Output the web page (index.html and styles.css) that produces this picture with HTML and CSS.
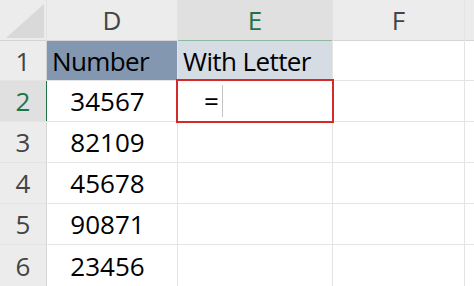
FILE: index.html
```html
<!DOCTYPE html>
<html lang="en">
<head>
    <meta charset="UTF-8">
    <title>Sheet</title>
    <link rel="stylesheet" href="styles.css">
</head>
<body>
    <div class="sheet">
        <!-- column headers -->
        <div class="corner"><span class="corner-tri"></span></div>
        <div class="col-head">D</div>
        <div class="col-head selected">E</div>
        <div class="col-head">F</div>
        <div class="col-head"></div>

        <!-- row 1 -->
        <div class="row-head">1</div>
        <div class="cell title-dark">Number</div>
        <div class="cell title-light">With Letter</div>
        <div class="cell"></div>
        <div class="cell"></div>

        <!-- row 2 -->
        <div class="row-head selected">2</div>
        <div class="cell num">34567</div>
        <div class="cell active"><span class="eq">=</span><span class="caret"></span></div>
        <div class="cell"></div>
        <div class="cell"></div>

        <div class="row-head">3</div>
        <div class="cell num">82109</div>
        <div class="cell"></div>
        <div class="cell"></div>
        <div class="cell"></div>

        <div class="row-head">4</div>
        <div class="cell num">45678</div>
        <div class="cell"></div>
        <div class="cell"></div>
        <div class="cell"></div>

        <div class="row-head">5</div>
        <div class="cell num">90871</div>
        <div class="cell"></div>
        <div class="cell"></div>
        <div class="cell"></div>

        <div class="row-head">6</div>
        <div class="cell num">23456</div>
        <div class="cell"></div>
        <div class="cell"></div>
        <div class="cell"></div>
    </div>
</body>
</html>
```

FILE: styles.css
```css
body {
    margin: 0;
    font-family: "Open Sans", "Noto Sans", sans-serif;
    background: #ffffff;
    overflow: hidden;
}

.sheet {
    display: grid;
    grid-template-columns: 46px 130px 154px 131px 1fr;
    grid-template-rows: 40px 39px 40px 40px 40px 40px 42px;
    gap: 1px;
    background-color: #e4e4e4;
    width: 474px;
    height: 286px;
}

.corner {
    position: relative;
    background-color: #ececec;
    box-shadow: 0 1px 0 #d4d4d4;
}

.corner-tri {
    position: absolute;
    right: 2px;
    bottom: 2px;
    width: 0;
    height: 0;
    border-left: 38px solid transparent;
    border-bottom: 34px solid #d9d9d9;
}

.col-head {
    display: flex;
    align-items: center;
    justify-content: center;
    background-color: #ececec;
    color: #444444;
    font-size: 26px;
    box-shadow: 0 1px 0 #d4d4d4;
}

.col-head.selected {
    background-color: #e0e0e0;
    color: #217346;
    box-shadow: 0 1px 0 #8fb8a0;
}

.row-head {
    display: flex;
    align-items: center;
    justify-content: center;
    background-color: #ececec;
    color: #444444;
    font-size: 26px;
    box-shadow: 1px 0 0 #d4d4d4;
}

.row-head.selected {
    background-color: #e0e0e0;
    color: #217346;
    box-shadow: 1px 0 0 #217346;
}

.cell {
    display: flex;
    align-items: center;
    background-color: #ffffff;
    color: #000000;
    font-size: 26px;
    padding-left: 5px;
}

.title-dark {
    background-color: #8497b0;
    letter-spacing: -0.6px;
}

.title-light {
    background-color: #d6dce4;
    letter-spacing: -0.6px;
}

.num {
    justify-content: center;
    padding-left: 0;
    padding-right: 9px;
}

.active {
    outline: 2px solid #d42a2a;
    outline-offset: 0px;
    position: relative;
    z-index: 1;
    padding-left: 26px;
}

.eq {
    font-size: 26px;
    line-height: 1;
}

.caret {
    width: 1px;
    height: 32px;
    margin-left: 3px;
    background-color: #c4c4c4;
}
```
